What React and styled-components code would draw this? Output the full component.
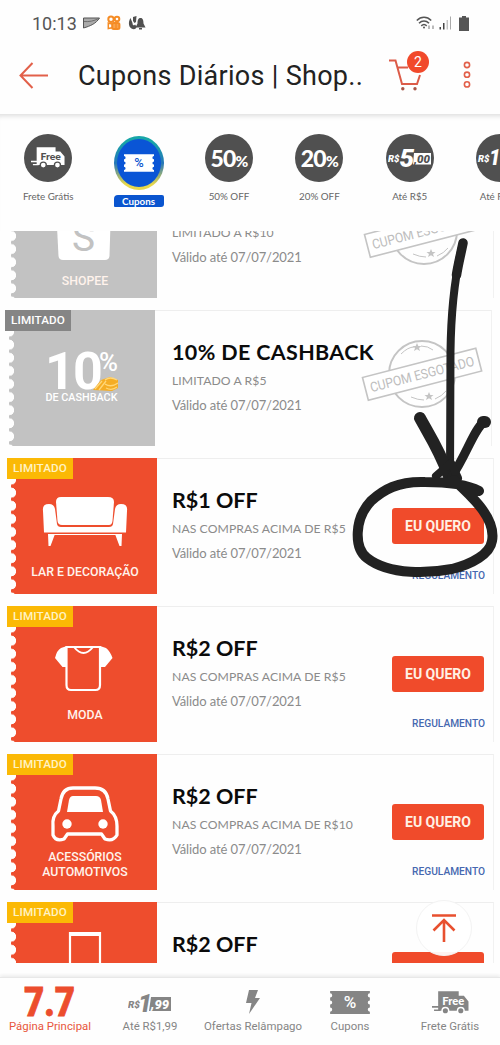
import styled, { createGlobalStyle } from "styled-components";

const coupons = [
  { title: "15% OFF", rule: "LIMITADO A R$10", label: "SHOPEE", icon: "shopee", soldOut: true, stampTop: 32 },
  { title: "10% DE CASHBACK", rule: "LIMITADO A R$5", icon: "cashback", soldOut: true, shifted: true, stampTop: 27 },
  { title: "R$1 OFF", rule: "NAS COMPRAS ACIMA DE R$5", label: "LAR E DECORAÇÃO", icon: "sofa" },
  { title: "R$2 OFF", rule: "NAS COMPRAS ACIMA DE R$5", label: "MODA", icon: "shirt" },
  { title: "R$2 OFF", rule: "NAS COMPRAS ACIMA DE R$10", label: "ACESSÓRIOS AUTOMOTIVOS", icon: "car" },
  { title: "R$2 OFF", rule: "NAS COMPRAS ACIMA DE R$10", label: "CELULARES", icon: "phone" },
];

function App() {
  return (
    <>
      <GlobalStyle />
      <Screen>
        <StatusBar />
        <Header />
        <Categories />
        <CouponList>
          <CouponScroll>
            {coupons.map((coupon, i) => (
              <Coupon key={i} {...coupon} />
            ))}
          </CouponScroll>
        </CouponList>
        <TabBar />
        <TopButton aria-label="Voltar ao topo">
          <svg width="26" height="30" viewBox="0 0 26 30" fill="none" stroke="#e8502f" strokeWidth="2.6">
            <path d="M1 2.5H25M13 29V7M2.5 17.5L13 7L23.5 17.5" />
          </svg>
        </TopButton>
        <Scribble />
      </Screen>
    </>
  );
}

export default App;

function StatusBar() {
  return (
    <StatusContainer>
      <Clock>10:13</Clock>
      <StatusIcons>
        <svg width="17" height="12" viewBox="0 0 17 12">
          <path d="M.5 1H16.5C13 6.5 7.5 9 .5 11Z" fill="#aaa" stroke="#555" />
          <path d="M1 4.5C6 5 11 4 15.5 1.5" fill="none" stroke="#666" strokeWidth=".9" />
        </svg>
        <svg width="14" height="16" viewBox="0 0 14 16" fill="none" stroke="#f58c25" strokeWidth="2">
          <circle cx="4" cy="4.2" r="2.7" />
          <circle cx="10" cy="4" r="2.3" />
          <rect x="5.2" y="8" width="7.2" height="6" rx="1.5" fill="#f9a44e" />
          <path d="M5 9L1.3 8V13.5L5 12.7" strokeWidth="1.5" />
          <path d="M9 8V14" strokeWidth="1.4" />
        </svg>
        <svg width="18" height="16" viewBox="0 0 18 16" fill="#505050">
          <path d="M2.5 3C.5 6 0 11.5 3.5 13.5C6 15 8.5 14 8.5 11.5L7 9.5C6 11 4.5 10.5 4.5 8Z" />
          <path d="M5 2L8.5 1L8 7L6.5 8L5 6Z" />
          <path d="M12.5 3C10 3 9.5 5.5 9.5 8.5L7.5 12.5H17.5L15.5 8.5C15.5 5.5 15 3 12.5 3ZM11 13H14V14.5H11Z" />
        </svg>
      </StatusIcons>
      <Signals>
        <svg width="20" height="15" viewBox="0 0 20 15" fill="none" stroke="#555" strokeWidth="1.6">
          <path d="M.8 4.5C5 .2 11 .2 15.2 4.5M3 7.2C6 4.2 10 4.2 13 7.2M5.3 9.8C7 8.2 9 8.2 10.7 9.8" />
          <circle cx="8" cy="11.5" r="1" fill="#555" stroke="none" />
          <path d="M13 13V9.5M17 9.5V13" stroke="#aaa" />
        </svg>
        <svg width="14" height="14" viewBox="0 0 14 14">
          <path d="M.5 11H2V13.5H.5Z" fill="#444" />
          <path d="M4 7H5.5V13.5H4Z" fill="#444" />
          <path d="M7.7 4H8.7V13.5H7.7ZM11 .5H12V13.5H11Z" fill="#aaa" />
        </svg>
        <svg width="10" height="15" viewBox="0 0 10 15" fill="#555">
          <path d="M3 0H7V1.5H10V15H0V1.5H3Z" />
        </svg>
      </Signals>
    </StatusContainer>
  );
}

function Header() {
  return (
    <HeaderContainer>
      <svg width="30" height="27" viewBox="0 0 30 27" fill="none" stroke="#e2604a" strokeWidth="2">
        <path d="M29 13.5H1.5M13.5 1L1.5 13.5L13.5 26" />
      </svg>
      <PageTitle>Cupons Diários | Shop..</PageTitle>
      <CartButton>
        <svg width="34" height="32" viewBox="0 0 34 32" fill="none" stroke="#dc5b48" strokeWidth="2">
          <path d="M0 1.5H6.5L13 25H28L31 16M8.7 8.5H19" />
          <circle cx="13.8" cy="29.8" r="1.7" fill="#a65447" stroke="none" />
          <circle cx="26" cy="29.8" r="1.7" fill="#a65447" stroke="none" />
        </svg>
        <CartCount>2</CartCount>
      </CartButton>
      <svg width="8" height="28" viewBox="0 0 8 28" fill="none" stroke="#e2604a" strokeWidth="1.6">
        <circle cx="4" cy="4" r="2.6" />
        <circle cx="4" cy="13.7" r="2.6" />
        <circle cx="4" cy="23.4" r="2.6" />
      </svg>
    </HeaderContainer>
  );
}

function Truck({ color, textColor, width, height }) {
  return (
    <svg width={width} height={height} viewBox="0 0 36 23">
      <path d="M6 0H26V4.5H31L35.5 10V19H6ZM0 14.5H6V16H0ZM2 17.8H8V19.2H2Z" fill={color} />
      <circle cx="13" cy="19" r="3.2" fill={color} stroke={textColor} strokeWidth="1.4" />
      <circle cx="28" cy="19" r="3.2" fill={color} stroke={textColor} strokeWidth="1.4" />
      <IconText x="10" y="13.4" fontSize="10" textLength="21.5" lengthAdjust="spacingAndGlyphs" fill={textColor}>
        Free
      </IconText>
    </svg>
  );
}

function Ticket({ color, textColor, width, height }) {
  return (
    <svg width={width} height={height} viewBox="0 0 38 22">
      <path
        d="M0 0H38V2.2A2 2 0 0 0 38 6.2V9A2 2 0 0 0 38 13V15.8A2 2 0 0 0 38 19.8V22H0V19.8A2 2 0 0 0 0 15.8V13A2 2 0 0 0 0 9V6.2A2 2 0 0 0 0 2.2Z"
        fill={color}
      />
      <TicketPercent x="13" y="16.5" fontSize="15.5" textLength="12" lengthAdjust="spacingAndGlyphs" fill={textColor}>
        %
      </TicketPercent>
    </svg>
  );
}

function Categories() {
  return (
    <CategoryRow>
      <Category>
        <CategoryCircle>
          <Truck color="#fff" textColor="#505050" width={34} height={22} />
        </CategoryCircle>
        <CategoryLabel>Frete Grátis</CategoryLabel>
      </Category>
      <Category $active>
        <ActiveCircle>
          <Ticket color="#fff" textColor="#0a55cf" width={30} height={18} />
        </ActiveCircle>
        <ActiveLabel>Cupons</ActiveLabel>
      </Category>
      <Category>
        <CategoryCircle>
          <Percent>50<small>%</small></Percent>
        </CategoryCircle>
        <CategoryLabel>50% OFF</CategoryLabel>
      </Category>
      <Category>
        <CategoryCircle>
          <Percent>20<small>%</small></Percent>
        </CategoryCircle>
        <CategoryLabel>20% OFF</CategoryLabel>
      </Category>
      <Category>
        <CategoryCircle>
          <svg width="44" height="24" viewBox="0 0 44 24">
            <PriceText x="0" y="15.5" fontSize="9" textLength="11.5" lengthAdjust="spacingAndGlyphs" fill="#fff">R$</PriceText>
            <path d="M26 7H43V18.5H25Z" fill="#fff" />
            <PriceText x="11.5" y="20.5" fontSize="26" fill="#fff">5</PriceText>
            <PriceText x="26" y="17" fontSize="11.5" textLength="16" lengthAdjust="spacingAndGlyphs" fill="#505050">,00</PriceText>
          </svg>
        </CategoryCircle>
        <CategoryLabel>Até R$5</CategoryLabel>
      </Category>
      <Category>
        <CategoryCircle>
          <svg width="46" height="24" viewBox="0 0 46 24">
            <PriceText x="1" y="15.5" fontSize="9" textLength="11.5" lengthAdjust="spacingAndGlyphs" fill="#fff">R$</PriceText>
            <PriceText x="12" y="19" fontSize="22" textLength="23" lengthAdjust="spacingAndGlyphs" fill="#fff">10</PriceText>
          </svg>
        </CategoryCircle>
        <CategoryLabel>Até R$10</CategoryLabel>
      </Category>
    </CategoryRow>
  );
}

function Coupon(props) {
  return (
    <Card $shifted={props.shifted}>
      <Tag $soldOut={props.soldOut}>LIMITADO</Tag>
      <Thumb $soldOut={props.soldOut}>
        <Picture name={props.icon} />
        {props.label && <ThumbLabel $icon={props.icon}>{props.label}</ThumbLabel>}
      </Thumb>
      <Info $shifted={props.shifted}>
        <CouponTitle $wide={props.icon === "cashback"}>{props.title}</CouponTitle>
        <Rule>{props.rule}</Rule>
        <Validity>Válido até 07/07/2021</Validity>
        {props.soldOut && <Stamp top={props.stampTop} />}
      </Info>
      {!props.soldOut && (
        <Actions>
          <WantButton>EU QUERO</WantButton>
          <Terms>REGULAMENTO</Terms>
        </Actions>
      )}
    </Card>
  );
}

// every picture shares the 146x136 box of the thumbnail
function Picture({ name }) {
  return (
    <PictureBox viewBox="0 0 146 136" fill="none">
      {name === "shopee" && (
        <>
          <path d="M45 45H100L98.5 94Q98 98 94 98H52Q48 98 47.5 94Z" fill="#fff" />
          <ShopeeS x="61" y="89" fontSize="38" textLength="23" lengthAdjust="spacingAndGlyphs">S</ShopeeS>
        </>
      )}
      {name === "cashback" && (
        <>
          <BigNumber x="36" y="79" fontSize="52">1</BigNumber>
          <BigNumber x="64" y="79" fontSize="52">0</BigNumber>
          <Symbol x="90" y="61" fontSize="26" textLength="19" lengthAdjust="spacingAndGlyphs">%</Symbol>
          <path d="M84 80L92 70L101 67L109 70V78L103 81Z" fill="#f5ad25" />
          <path d="M86 79L93 71M90 80L97 71M96 70Q101 66 108 70M96 74Q102 78 109 73M97 78Q103 81 108 77" stroke="#ffd779" strokeWidth="1.3" />
          <Symbol x="36.5" y="91" fontSize="11" textLength="72" lengthAdjust="spacingAndGlyphs">DE CASHBACK</Symbol>
        </>
      )}
      {name === "sofa" && (
        <>
          <path d="M45 44Q45 39 50 39H97Q103 39 103 44L101.5 63Q101 67 98 67H51Q47 67 46.5 63Z" fill="#fff" />
          <path d="M32 53Q31 46 38 46Q43 46 44 51L46 66Q46.5 69 50 69H98Q101.5 69 102 66L104 51Q105 46 110 46Q117 46 116 53L115 74.5H33Z" fill="#fff" />
          <path d="M37 76H44L39.5 88H37.5ZM104 76H111L110.5 88H108.5Z" fill="#fff" />
          <path d="M43 76.5H106" stroke="#fff" />
        </>
      )}
      {name === "shirt" && (
        <>
          <path d="M56 40V61H51.5L44 52Q46 44 50 42ZM89 40L95 42Q99 45 101.5 52L94 61H89Z" fill="#fff" />
          <path d="M57 41H89V79Q89 84 84.5 84H60Q55.5 84 55.5 79V41Z" stroke="#fff" strokeWidth="2.2" />
          <path d="M63 41Q72.5 53 82 41" stroke="#fff" strokeWidth="2" />
        </>
      )}
      {name === "car" && (
        <>
          <path
            d="M62 34H84Q95 34 97 45L99.5 57Q106 62 106 72V81Q102 88 94 85L90.5 80H56.5L53 85Q45 88 42 81V72Q41 62 47.5 57L50 45Q52 34 62 34Z"
            stroke="#fff"
            strokeWidth="3.3"
            strokeLinejoin="round"
          />
          <path d="M62 42H85Q89 42 90 46L92 58H56L58 46Q59 42 62 42Z" fill="#fff" />
          <circle cx="56" cy="70" r="4.7" fill="#fff" />
          <circle cx="92" cy="70" r="4.7" fill="#fff" />
        </>
      )}
      {name === "phone" && (
        <>
          <path d="M59 31H89V100H59Z" stroke="#fff" strokeWidth="2.2" />
          <path d="M59 32H89" stroke="#fff" strokeWidth="4" />
        </>
      )}
    </PictureBox>
  );
}

function Stamp({ top }) {
  return (
    <StampBox $top={top} width="124" height="72" viewBox="0 0 124 72" fill="none" stroke="#c4c4c4">
      <circle cx="62" cy="36" r="33" strokeWidth="2" />
      <path d="M41 16Q48 9 54 9M61 8Q68 8 73 12M51 59Q58 62 64 62M75 61Q82 58 86 53" strokeWidth="1" />
      <path
        d="M57 5L58.3 8H61.5L59 10L60 13L57 11.2L54 13L55 10L52.5 8H55.7ZM69 54L70.3 57H73.5L71 59L72 62L69 60.2L66 62L67 59L64.5 57H67.7Z"
        fill="#c4c4c4"
        stroke="none"
      />
      <g transform="rotate(-14.5 62 36)">
        <path d="M3.5 24.5H120.5V48H3.5Z" fill="#fff" strokeWidth="1.6" />
        <StampText x="8.5" y="41" fontSize="13.5" textLength="107" lengthAdjust="spacingAndGlyphs">
          CUPOM ESGOTADO
        </StampText>
      </g>
    </StampBox>
  );
}

function TabBar() {
  return (
    <Tabs>
      <Tab $active $width={100}>
        <TabIcon>
          <svg width="52" height="33" viewBox="0 0 52 33" fill="#ec4d2d">
            <Seven x="0" y="30" fontSize="40" textLength="51" lengthAdjust="spacingAndGlyphs">7.7</Seven>
          </svg>
        </TabIcon>
        Página Principal
      </Tab>
      <Tab $width={100}>
        <TabIcon>
          <svg width="44" height="24" viewBox="0 0 44 24">
            <path d="M23 6H43V20H21Z" fill="#858585" />
            <PriceText x="0" y="16.5" fontSize="9" textLength="12" lengthAdjust="spacingAndGlyphs" fill="#858585">R$</PriceText>
            <PriceText x="10" y="20.5" fontSize="26" textLength="14" lengthAdjust="spacingAndGlyphs" fill="#858585">1</PriceText>
            <PriceText x="23" y="18" fontSize="13.5" textLength="18" lengthAdjust="spacingAndGlyphs" fill="#fff">,99</PriceText>
          </svg>
        </TabIcon>
        Até R$1,99
      </Tab>
      <Tab $width={106}>
        <TabIcon>
          <svg width="14" height="26" viewBox="0 0 14 26" fill="#858585">
            <path d="M3 0H12L9 8H14L3 24L5.5 13H0Z" />
          </svg>
        </TabIcon>
        Ofertas Relâmpago
      </Tab>
      <Tab $width={88}>
        <TabIcon>
          <Ticket color="#858585" textColor="#fff" width={40} height={23} />
        </TabIcon>
        Cupons
      </Tab>
      <Tab $width={112}>
        <TabIcon>
          <Truck color="#858585" textColor="#fff" width={37} height={24} />
        </TabIcon>
        Frete Grátis
      </Tab>
    </Tabs>
  );
}

function Scribble() {
  return (
    <ScribbleLayer width="500" height="1045" viewBox="0 0 500 1045">
      <path d="M463 243C455 274 451 310 450.5 352C450 390 450 430 450 478" strokeWidth="8" />
      <path d="M463 243C461 253 458 265 456.5 275" strokeWidth="9.5" />
      <path d="M420 418C428 433 438 447 449 476" strokeWidth="12" />
      <path d="M484 422C474 429 466 456 452 476" strokeWidth="9" />
      <path d="M436 476L451 463L458 478" strokeWidth="8" />
      <path d="M483 422H485" strokeWidth="12" />
      <path
        d="M479 491C466 484 447 482 425 482C398 481 383 490 371 501C354 519 354 548 367 558C390 576 431 573 452 569C472 564 490 554 492 541C496 520 476 500 454 480"
        strokeWidth="10"
      />
    </ScribbleLayer>
  );
}

const GlobalStyle = createGlobalStyle`
  * {
    box-sizing: border-box;
  }
  body {
    margin: 0;
    background-color: #fff;
    font-family: Roboto, "Liberation Sans", sans-serif;
  }
  svg {
    display: block;
    flex-shrink: 0;
  }
`;

const Screen = styled.div`
  position: relative;
  display: flex;
  flex-direction: column;
  width: 500px;
  height: 1045px;
  overflow: hidden;
  background-color: #fefefe;
`;

const StatusContainer = styled.div`
  display: flex;
  align-items: center;
  height: 46px;
  padding: 0 31px 0 32px;
`;

const Clock = styled.span`
  width: 51px;
  font-size: 18px;
  color: #555;
`;

const StatusIcons = styled.div`
  display: flex;
  align-items: center;
  gap: 7px;
`;

const Signals = styled.div`
  display: flex;
  align-items: center;
  gap: 3px;
  margin-left: auto;
  svg:last-child {
    margin-left: 3px;
  }
`;

const HeaderContainer = styled.header`
  display: flex;
  align-items: center;
  height: 68px;
  padding: 0 29px 10px 19px;
`;

const PageTitle = styled.h1`
  width: 311px;
  margin: 1px 0 0 29px;
  font-size: 27px;
  font-weight: 400;
  letter-spacing: 0.3px;
  white-space: nowrap;
  color: #222;
`;

const CartButton = styled.div`
  position: relative;
  width: 34px;
  margin-right: auto;
`;

const CartCount = styled.span`
  position: absolute;
  top: -8px;
  left: 18px;
  width: 22px;
  height: 22px;
  border-radius: 50%;
  background-color: #f1492b;
  color: #fff;
  font-size: 14px;
  line-height: 22px;
  text-align: center;
`;

const CategoryRow = styled.nav`
  display: flex;
  width: 546px;
  height: 117px;
  padding-left: 3px;
  box-shadow: inset 0 6px 5px -4px #ddd;
`;

const Category = styled.div`
  display: flex;
  flex-direction: column;
  align-items: center;
  width: 90.4px;
  flex-shrink: 0;
  padding-top: ${(props) => (props.$active ? 22 : 20)}px;
`;

const CategoryCircle = styled.div`
  display: flex;
  align-items: center;
  justify-content: center;
  width: 48px;
  height: 48px;
  border-radius: 50%;
  background-color: #505050;
`;

const ActiveCircle = styled(CategoryCircle)`
  width: 50px;
  height: 54px;
  border: 3px solid transparent;
  background: linear-gradient(#0a55d6, #0a55d6) padding-box,
    linear-gradient(#18a6a8 10%, #2577b8 50%, #e8d84a 90%) border-box;
`;

const CategoryLabel = styled.span`
  margin-top: 7px;
  font-family: Lato, sans-serif;
  font-size: 9.8px;
  line-height: 14px;
  white-space: nowrap;
  color: #666;
`;

const ActiveLabel = styled(CategoryLabel)`
  width: 50px;
  height: 12px;
  margin-top: 5px;
  border-radius: 4px 2px 3px 1px;
  background-color: #0a55cf;
  color: #fff;
  font-weight: 700;
  line-height: 12px;
  text-align: center;
`;

const Percent = styled.span`
  font-family: Lato, sans-serif;
  font-size: 23px;
  font-weight: 900;
  letter-spacing: -0.8px;
  color: #fff;
  small {
    font-size: 15.5px;
  }
`;

const IconText = styled.text`
  font-family: Lato, sans-serif;
  font-weight: 900;
`;

const TicketPercent = styled.text`
  font-family: Roboto, sans-serif;
  font-weight: 500;
`;

const PriceText = styled.text`
  font-family: Roboto, sans-serif;
  font-weight: 900;
  font-style: italic;
`;

const CouponList = styled.main`
  height: 732px;
  overflow: hidden;
`;

const CouponScroll = styled.div`
  display: flex;
  flex-direction: column;
  gap: 12px;
  margin-top: -69px;
`;

const Card = styled.article`
  position: relative;
  display: flex;
  flex-shrink: 0;
  width: 483px;
  height: 136px;
  margin-left: ${(props) => (props.$shifted ? 9 : 11)}px;
  border-top: 1px solid #eee;
  border-right: 1px solid #f1f1f1;
`;

const Tag = styled.span`
  position: absolute;
  z-index: 1;
  top: -1px;
  left: -4px;
  width: 66px;
  height: 21px;
  background-color: ${(props) => (props.$soldOut ? "#858585" : "#fbb905")};
  color: ${(props) => (props.$soldOut ? "#fff" : "#fff3c4")};
  font-size: 11.7px;
  font-weight: 500;
  letter-spacing: 0.1px;
  line-height: 21px;
  text-align: center;
`;

const Thumb = styled.div`
  display: flex;
  position: relative;
  width: 146px;
  height: 136px;
  margin-top: -1px;
  flex-shrink: 0;
  justify-content: center;
  background: radial-gradient(circle at 0 6.5px, #fefefe 4.8px, transparent 5.4px) 0 2px / 8px 13.1px repeat-y,
    ${(props) => (props.$soldOut ? "#c2c2c2" : "#ee4d2d")};
`;

const PictureBox = styled.svg`
  position: absolute;
  inset: 0;
  width: 146px;
  height: 136px;
`;

const ThumbLabel = styled.span`
  z-index: 1;
  align-self: flex-start;
  width: 114px;
  margin: ${(props) => ({ shopee: 112, shirt: 102, car: 96 }[props.$icon] || 107)}px 0 0 2px;
  font-size: 12.3px;
  font-weight: 500;
  line-height: 15px;
  text-align: center;
  color: #fff3ec;
`;

const Info = styled.div`
  position: relative;
  width: 221px;
  flex-shrink: 0;
  padding: 27px 0 0 ${(props) => (props.$shifted ? 17 : 15)}px;
  font-family: Lato, sans-serif;
  white-space: nowrap;
`;

const CouponTitle = styled.h2`
  margin: 0 0 3px;
  font-size: 21.5px;
  font-weight: 700;
  line-height: 28px;
  letter-spacing: ${(props) => (props.$wide ? 0.35 : 0)}px;
  color: #0b0b0b;
`;

const Rule = styled.p`
  margin: 0;
  font-size: 12.2px;
  letter-spacing: 0.08px;
  line-height: 24px;
  color: #8b8b8b;
`;

const Validity = styled.p`
  margin: 0;
  font-size: 13px;
  letter-spacing: -0.1px;
  line-height: 25px;
  color: #8b8b8b;
`;

const StampBox = styled.svg`
  position: absolute;
  top: ${(props) => props.$top}px;
  left: 205px;
`;

const StampText = styled.text`
  fill: #bdbdbd;
  stroke: none;
  font-family: Roboto, sans-serif;
`;

const ShopeeS = styled.text`
  fill: #c2c2c2;
  font-family: Roboto, sans-serif;
`;

const BigNumber = styled.text`
  fill: #fff;
  font-family: Roboto, sans-serif;
  font-weight: 700;
`;

const Symbol = styled.text`
  fill: #fff;
  font-family: Roboto, sans-serif;
  font-weight: 500;
`;

const Seven = styled.text`
  font-family: Roboto, sans-serif;
  font-weight: 900;
  stroke: #ec4d2d;
  stroke-width: 0.8px;
`;

const Actions = styled.div`
  display: flex;
  flex-direction: column;
  align-items: flex-end;
  flex: 1;
  padding: 49px 9px 0 0;
`;

const WantButton = styled.button`
  width: 92px;
  height: 36px;
  padding: 0;
  border: none;
  border-radius: 3px;
  background-color: #f04b2b;
  color: #fff0e4;
  font-family: Roboto, sans-serif;
  font-size: 14px;
  font-weight: 700;
`;

const Terms = styled.a`
  margin: 25px -1px 0 0;
  font-size: 10.2px;
  font-weight: 500;
  line-height: 14px;
  color: #4668b0;
`;

const Tabs = styled.footer`
  display: flex;
  height: 68px;
  margin-top: 14px;
  border-top: 1px solid #e8e8e8;
  box-shadow: 0 -2px 3px #eee;
`;

const Tab = styled.div`
  display: flex;
  flex-direction: column;
  align-items: center;
  flex-shrink: 0;
  width: ${(props) => props.$width}px;
  padding-top: 8px;
  font-size: 11.4px;
  line-height: 14px;
  white-space: nowrap;
  color: ${(props) => (props.$active ? "#e8573d" : "#858585")};
`;

const TabIcon = styled.div`
  display: flex;
  align-items: center;
  height: 33px;
`;

const TopButton = styled.button`
  position: absolute;
  top: 900px;
  left: 416px;
  display: flex;
  align-items: center;
  justify-content: center;
  width: 56px;
  height: 56px;
  padding: 0;
  border: 1px solid #f3f3f3;
  border-radius: 50%;
  background-color: rgba(255, 255, 255, 0.93);
`;

const ScribbleLayer = styled.svg`
  position: absolute;
  inset: 0;
  pointer-events: none;
  fill: none;
  stroke: #222;
  stroke-linecap: round;
  stroke-linejoin: round;
`;
